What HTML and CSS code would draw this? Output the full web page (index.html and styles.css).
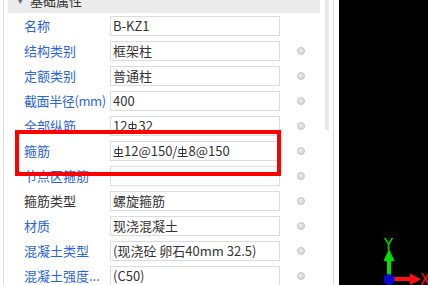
FILE: index.html
```html
<!DOCTYPE html>
<html>
<head>
<meta charset="utf-8">
<link rel="stylesheet" href="styles.css">
</head>
<body>
<div class="app">
  <div class="panel">
    <div class="content">
      <div class="group-head"><span class="caret">▾</span><span>基础属性</span></div>
      <div class="rows">
        <div class="row"><span class="label">名称</span><div class="field">B-KZ1</div><span class="radio-slot"></span></div>
        <div class="row"><span class="label">结构类别</span><div class="field">框架柱</div><span class="radio"></span></div>
        <div class="row"><span class="label">定额类别</span><div class="field">普通柱</div><span class="radio"></span></div>
        <div class="row"><span class="label tight">截面半径(mm)</span><div class="field">400</div><span class="radio"></span></div>
        <div class="row"><span class="label">全部纵筋</span><div class="field">12<svg class="bar" viewBox="0 0 11 11" width="11" height="11"><path d="M5.5 0.5V10 M2 3.5h7v4h-7z M0.5 10.5h10"/></svg>32</div><span class="radio"></span></div>
        <div class="row"><span class="label">箍筋</span><div class="field"><svg class="bar" viewBox="0 0 11 11" width="11" height="11"><path d="M5.5 0.5V10 M2 3.5h7v4h-7z M0.5 10.5h10"/></svg>12@150/<svg class="bar" viewBox="0 0 11 11" width="11" height="11"><path d="M5.5 0.5V10 M2 3.5h7v4h-7z M0.5 10.5h10"/></svg>8@150</div><span class="radio"></span></div>
        <div class="row"><span class="label">节点区箍筋</span><div class="field"></div><span class="radio"></span></div>
        <div class="row"><span class="label dark">箍筋类型</span><div class="field">螺旋箍筋</div><span class="radio"></span></div>
        <div class="row"><span class="label">材质</span><div class="field">现浇混凝土</div><span class="radio"></span></div>
        <div class="row"><span class="label">混凝土类型</span><div class="field">(现浇砼 卵石40mm 32.5)</div><span class="radio"></span></div>
        <div class="row"><span class="label">混凝土强度...</span><div class="field">(C50)</div><span class="radio"></span></div>
      </div>
    </div>
    <div class="scroll"><div class="thumb"></div></div>
    <div class="divider"></div>
  </div>
  <div class="canvas">
    <svg class="axes" viewBox="0 0 89 285" width="89" height="285">
      <text x="45" y="250" class="ax-y">Y</text>
      <rect x="48" y="259" width="4" height="20" fill="#00e000"/>
      <polygon points="44.5,261 55.5,261 50,249" fill="#00e000"/>
      <rect x="54" y="277" width="18" height="4" fill="#ff1010"/>
      <polygon points="71,273.5 71,285 82,279.3" fill="#ff1010"/>
      <circle cx="50" cy="279.5" r="5.5" fill="#0a0acc"/>
      <text x="81" y="285" class="ax-x">X</text>
    </svg>
  </div>
  <div class="highlight"></div>
</div>
</body>
</html>
```

FILE: styles.css
```css
html, body {
  margin: 0;
  padding: 0;
  background: #ffffff;
}
body {
  font-family: "Noto Sans CJK SC", "Noto Sans", sans-serif;
  font-size: 13px;
  color: #333333;
}
.app {
  position: relative;
  display: flex;
  width: 428px;
  height: 285px;
  overflow: hidden;
}
.panel {
  display: flex;
  width: 339px;
  flex: none;
  background: #ffffff;
}
.content {
  margin-left: 3px;
  border-left: 1px solid #dedede;
  width: 317px;
  padding-left: 4px;
  box-sizing: border-box;
  overflow: hidden;
}
.group-head {
  margin-top: -12px;
  height: 25px;
  background: #ebebeb;
  display: flex;
  align-items: center;
  padding-left: 10px;
  gap: 4px;
  color: #333333;
  line-height: 25px;
}
.caret {
  font-size: 9px;
  color: #666666;
  width: 8px;
}
.rows {
  display: flex;
  flex-direction: column;
  gap: 5px;
  margin-top: 3px;
}
.row {
  display: flex;
  align-items: center;
  height: 20px;
  padding-left: 16px;
}
.label {
  width: 86px;
  flex: none;
  color: #2a64e0;
  white-space: nowrap;
  line-height: 20px;
}
.label.tight {
  letter-spacing: -0.4px;
}
.label.dark {
  color: #333333;
}
.field {
  width: 170px;
  height: 20px;
  box-sizing: border-box;
  border: 1px solid #dcdcdc;
  padding-left: 2px;
  line-height: 18px;
  color: #333333;
  white-space: nowrap;
  flex: none;
}
.bar {
  display: inline-block;
  vertical-align: -1px;
  fill: none;
  stroke: #333333;
  stroke-width: 1;
}
.radio, .radio-slot {
  width: 8px;
  height: 8px;
  margin-left: 17px;
  flex: none;
  box-sizing: border-box;
}
.radio {
  border-radius: 50%;
  background: radial-gradient(circle at 40% 35%, #ececec, #d0d0d0);
  border: 1px solid #c4c4c4;
}
.scroll {
  width: 13px;
  flex: none;
  padding-left: 5px;
  box-sizing: border-box;
}
.thumb {
  width: 4px;
  height: 130px;
  background: #e8e8e8;
}
.divider {
  width: 1px;
  flex: none;
  background: #dcdcdc;
  margin-right: 4px;
}
.canvas {
  flex: 1;
  background: #000000;
  position: relative;
}
.axes {
  position: absolute;
  left: 0;
  top: 0;
  display: block;
}
.ax-y {
  font-family: "DejaVu Sans", sans-serif;
  font-size: 15px;
  fill: #00e000;
}
.ax-x {
  font-family: "DejaVu Sans", sans-serif;
  font-size: 15px;
  fill: #ff1010;
}
.highlight {
  position: absolute;
  left: 15px;
  top: 130px;
  width: 266px;
  height: 46px;
  box-sizing: border-box;
  border: 4px solid #ff0000;
  pointer-events: none;
}
```
